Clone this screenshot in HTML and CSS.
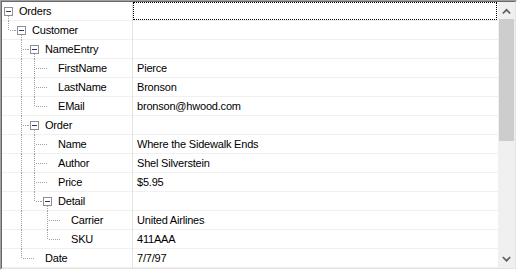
FILE: index.html
```html
<!DOCTYPE html>
<html>
<head>
<meta charset="utf-8">
<link rel="stylesheet" href="styles.css">
</head>
<body>
<div class="frame">
  <div class="inner">
    <div class="rows">
      <div class="row">
        <div class="name"><span class="c node open"><span class="box"></span></span><span class="label">Orders</span></div>
        <div class="value focus"></div>
      </div>
      <div class="row">
        <div class="name"><span class="c elbow"></span><span class="c node join open"><span class="box"></span></span><span class="label">Customer</span></div>
        <div class="value"></div>
      </div>
      <div class="row">
        <div class="name"><span class="c"></span><span class="c tee"></span><span class="c node join open"><span class="box"></span></span><span class="label">NameEntry</span></div>
        <div class="value"></div>
      </div>
      <div class="row">
        <div class="name"><span class="c"></span><span class="c pipe"></span><span class="c tee"></span><span class="c leaf"></span><span class="label">FirstName</span></div>
        <div class="value">Pierce</div>
      </div>
      <div class="row">
        <div class="name"><span class="c"></span><span class="c pipe"></span><span class="c tee"></span><span class="c leaf"></span><span class="label">LastName</span></div>
        <div class="value">Bronson</div>
      </div>
      <div class="row">
        <div class="name"><span class="c"></span><span class="c pipe"></span><span class="c elbow"></span><span class="c leaf"></span><span class="label">EMail</span></div>
        <div class="value">bronson@hwood.com</div>
      </div>
      <div class="row">
        <div class="name"><span class="c"></span><span class="c tee"></span><span class="c node join open"><span class="box"></span></span><span class="label">Order</span></div>
        <div class="value"></div>
      </div>
      <div class="row">
        <div class="name"><span class="c"></span><span class="c pipe"></span><span class="c tee"></span><span class="c leaf"></span><span class="label">Name</span></div>
        <div class="value">Where the Sidewalk Ends</div>
      </div>
      <div class="row">
        <div class="name"><span class="c"></span><span class="c pipe"></span><span class="c tee"></span><span class="c leaf"></span><span class="label">Author</span></div>
        <div class="value">Shel Silverstein</div>
      </div>
      <div class="row">
        <div class="name"><span class="c"></span><span class="c pipe"></span><span class="c tee"></span><span class="c leaf"></span><span class="label">Price</span></div>
        <div class="value">$5.95</div>
      </div>
      <div class="row">
        <div class="name"><span class="c"></span><span class="c pipe"></span><span class="c elbow"></span><span class="c node join open"><span class="box"></span></span><span class="label">Detail</span></div>
        <div class="value"></div>
      </div>
      <div class="row">
        <div class="name"><span class="c"></span><span class="c pipe"></span><span class="c"></span><span class="c tee"></span><span class="c leaf"></span><span class="label">Carrier</span></div>
        <div class="value">United Airlines</div>
      </div>
      <div class="row">
        <div class="name"><span class="c"></span><span class="c pipe"></span><span class="c"></span><span class="c elbow"></span><span class="c leaf"></span><span class="label">SKU</span></div>
        <div class="value">411AAA</div>
      </div>
      <div class="row">
        <div class="name"><span class="c"></span><span class="c elbow"></span><span class="c leaf"></span><span class="label">Date</span></div>
        <div class="value">7/7/97</div>
      </div>
    </div>
    <div class="sb">
      <div class="sb-btn">
        <svg width="17" height="17" viewBox="0 0 17 17"><path d="M4.8 11.5 L8.5 7.8 L12.2 11.5" fill="none" stroke="#606060" stroke-width="1.7"/></svg>
      </div>
      <div class="track"><div class="thumb"></div></div>
      <div class="sb-btn">
        <svg width="17" height="17" viewBox="0 0 17 17"><path d="M4.8 6 L8.5 9.7 L12.2 6" fill="none" stroke="#606060" stroke-width="1.7"/></svg>
      </div>
    </div>
  </div>
</div>
</body>
</html>
```
FILE: styles.css
```css
html, body {
  margin: 0;
  padding: 0;
  background: #ffffff;
}

.frame {
  width: 517px;
  height: 270px;
  box-sizing: border-box;
  border: 1px solid;
  border-color: #a0a0a0 #ffffff #ffffff #a0a0a0;
}

.inner {
  height: 100%;
  box-sizing: border-box;
  border: 1px solid;
  border-color: #696969 #e3e3e3 #e3e3e3 #696969;
  display: flex;
  background: #ffffff;
  font-family: "Liberation Sans", Arial, sans-serif;
  font-size: 11px;
  color: #000000;
}

.rows {
  width: 496px;
  display: flex;
  flex-direction: column;
}

.row {
  height: 19px;
  display: flex;
  background: linear-gradient(#f0f0f0, #f0f0f0) left bottom / 100% 1px no-repeat;
}

.name {
  width: 131px;
  box-sizing: border-box;
  border-right: 1px solid #e3e3e3;
  display: flex;
  flex: none;
}

.label {
  padding-left: 4px;
  line-height: 18px;
  white-space: nowrap;
  letter-spacing: -0.2px;
}

.value {
  flex: 1;
  padding-left: 4px;
  line-height: 18px;
  height: 18px;
  white-space: nowrap;
  letter-spacing: -0.2px;
}

.value.focus {
  border: 1px dotted #000000;
  padding-left: 3px;
  box-sizing: border-box;
  margin-right: 1px;
}

/* tree line cells */
.c {
  width: 13px;
  height: 19px;
  flex: none;
  position: relative;
}

.pipe::before,
.tee::before,
.elbow::before,
.open::before {
  content: "";
  position: absolute;
  left: 6px;
  top: 0;
  width: 1px;
  height: 19px;
  background: linear-gradient(#a0a0a0 50%, transparent 50%) 0 0 / 1px 2px repeat-y;
}

.elbow::before {
  height: 10px;
}

.tee::after,
.elbow::after,
.leaf::after,
.join::after {
  content: "";
  position: absolute;
  top: 9px;
  height: 1px;
  background: linear-gradient(to right, #a0a0a0 50%, transparent 50%) 0 0 / 2px 1px repeat-x;
}

.tee::after,
.elbow::after {
  left: 8px;
  width: 5px;
}

.leaf::after {
  left: 1px;
  width: 6px;
}

.join::after {
  left: 0;
  width: 2px;
}

.node {
  display: flex;
  align-items: center;
  justify-content: center;
}

.open::before {
  top: 14px;
  height: 5px;
}

.box {
  width: 9px;
  height: 9px;
  box-sizing: border-box;
  border: 1px solid #8e8f8f;
  background: #ffffff;
  position: relative;
}

.box::before {
  content: "";
  position: absolute;
  left: 1px;
  top: 3px;
  width: 5px;
  height: 1px;
  background: #223a74;
}

/* scrollbar */
.sb {
  width: 17px;
  flex: none;
  background: #f0f0f0;
  display: flex;
  flex-direction: column;
}

.sb-btn {
  height: 17px;
  flex: none;
}

.sb-btn svg {
  display: block;
}

.track {
  flex: 1;
  padding: 0 1px;
}

.thumb {
  height: 122px;
  background: #cdcdcd;
}
```
